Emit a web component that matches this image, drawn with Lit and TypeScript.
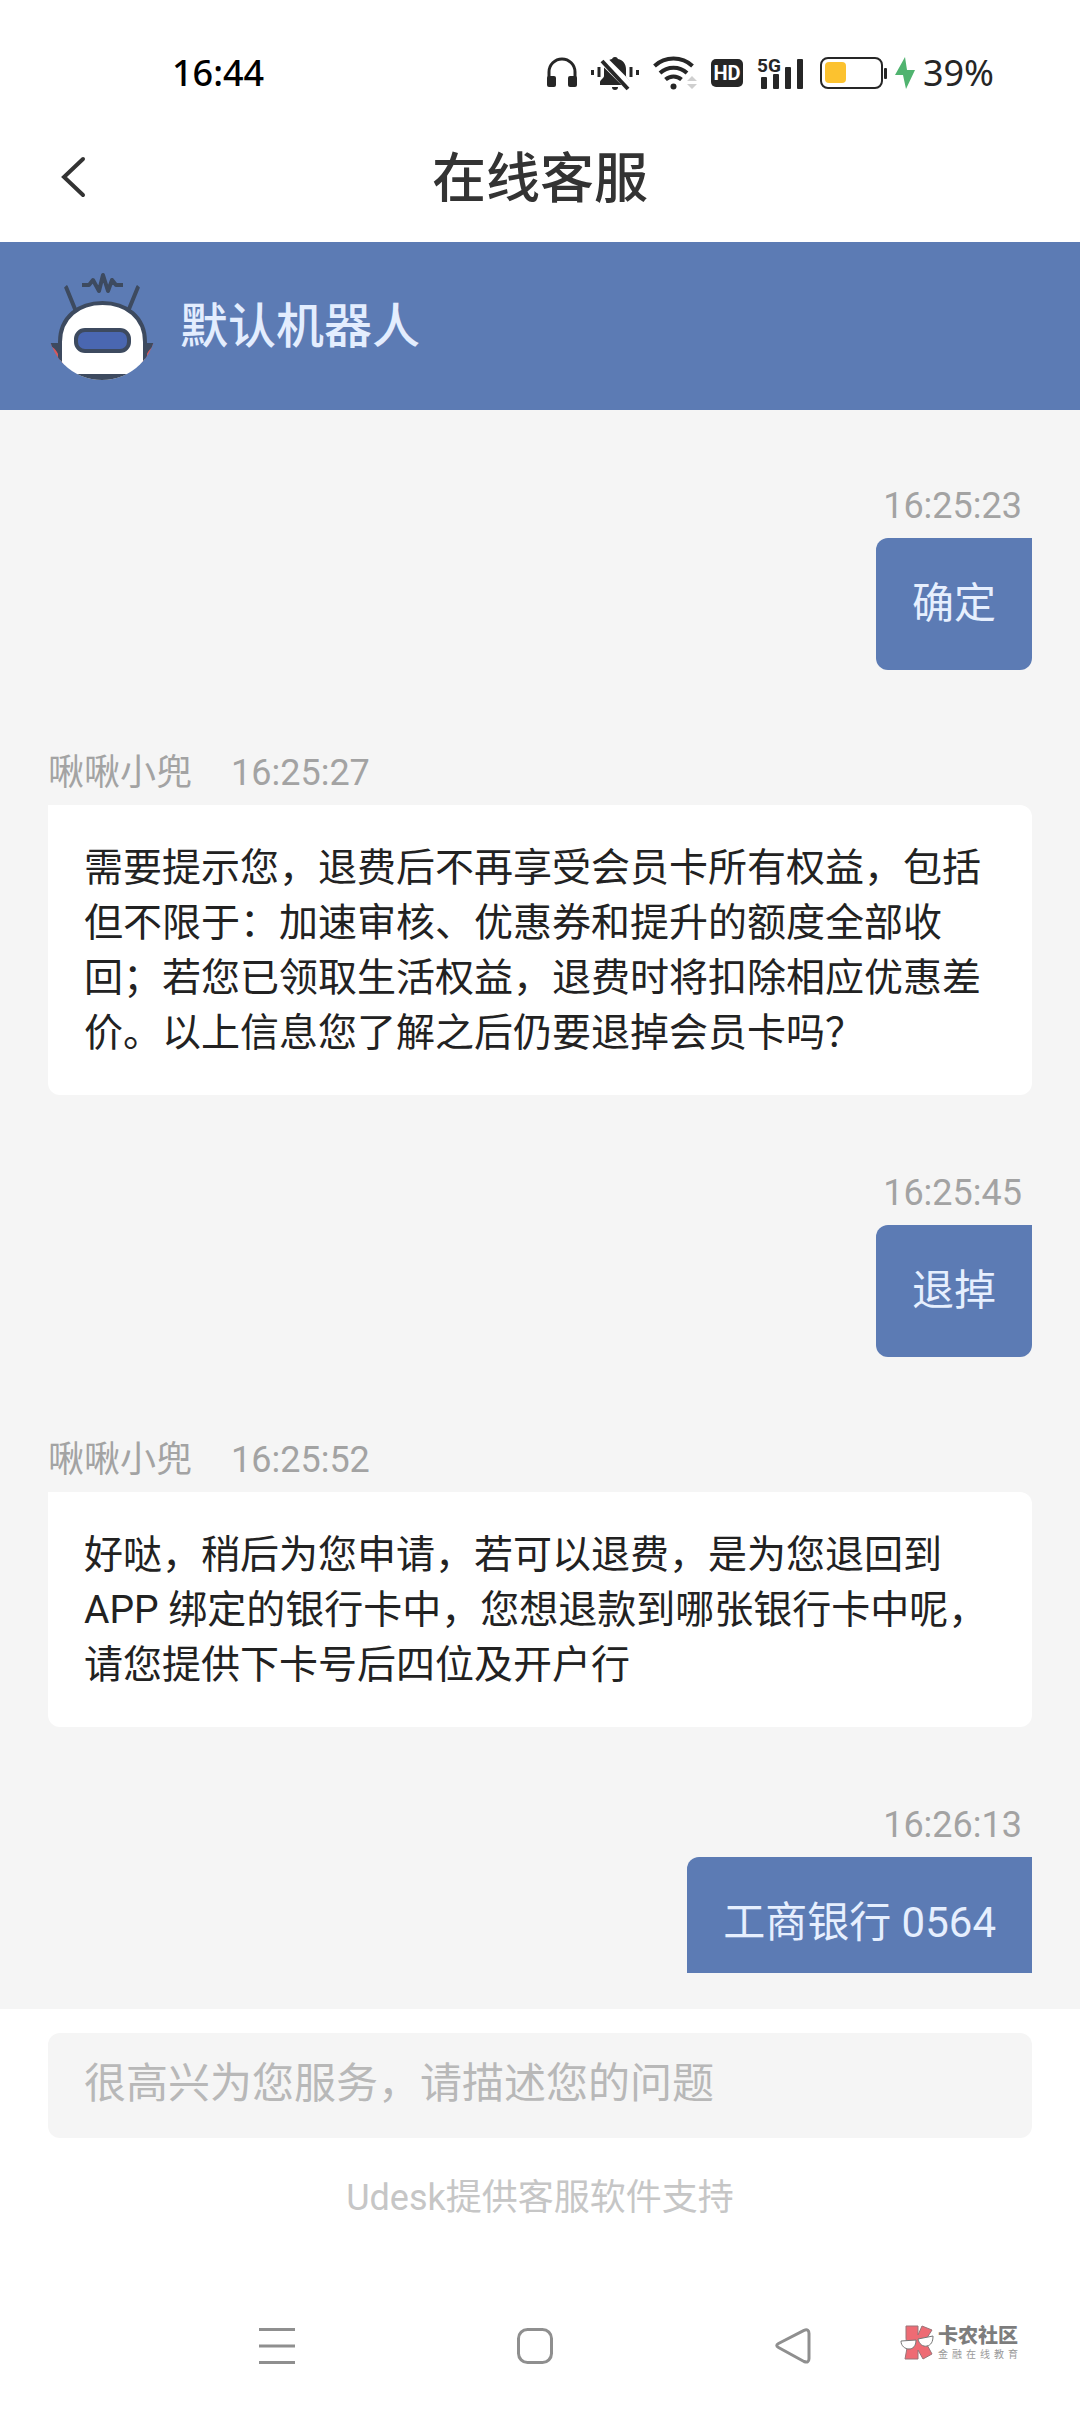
import { LitElement, html, css, svg } from "lit";
import { customElement, property, state } from "lit/decorators.js";

interface Message {
  from: "agent" | "user";
  time: string;
  text: string;
}

const AGENT_NAME = "啾啾小兜";

const MESSAGES: Message[] = [
  { from: "user", time: "16:25:23", text: "确定" },
  {
    from: "agent",
    time: "16:25:27",
    text: "需要提示您，退费后不再享受会员卡所有权益，包括但不限于：加速审核、优惠券和提升的额度全部收回；若您已领取生活权益，退费时将扣除相应优惠差价。以上信息您了解之后仍要退掉会员卡吗？",
  },
  { from: "user", time: "16:25:45", text: "退掉" },
  {
    from: "agent",
    time: "16:25:52",
    text: "好哒，稍后为您申请，若可以退费，是为您退回到 APP 绑定的银行卡中，您想退款到哪张银行卡中呢，请您提供下卡号后四位及开户行",
  },
  { from: "user", time: "16:26:13", text: "工商银行 0564" },
];

/* Device status bar: clock on the left, indicators on the right. */
@customElement("status-bar")
export class StatusBar extends LitElement {
  static styles = css`
    :host {
      display: flex;
      align-items: center;
      justify-content: space-between;
      height: 82px;
      padding: 32px 86px 0 172px;
      background: #fff;
      color: #262626;
      font-family: "Noto Sans", sans-serif;
      font-size: 36px;
      font-weight: 500;
      line-height: 48px;
    }
    .clock {
      color: #000;
    }
    .indicators,
    .power {
      display: flex;
      align-items: center;
    }
    .indicators {
      gap: 14px;
    }
    .power {
      gap: 8px;
      padding-left: 2px;
    }
    .level {
      font-weight: 400;
    }
    svg {
      display: block;
      flex: none;
      overflow: visible;
    }
    .glyph {
      font-family: Roboto, sans-serif;
      font-weight: 700;
    }
  `;

  render() {
    return html`
      <span class="clock">16:44</span>
      <div class="indicators">
        <svg width="30" height="32" viewBox="0 0 30 32" aria-label="耳机">
          <path d="M2 22V15a13 13 0 0 1 26 0v7" fill="none" stroke="#262626" stroke-width="3" />
          <rect x="0" y="19" width="9" height="11" rx="2" fill="#262626" />
          <rect x="21" y="19" width="9" height="11" rx="2" fill="#262626" />
        </svg>
        <svg width="48" height="36" viewBox="0 0 48 36" aria-label="振动">
          <path
            d="M24 2a3 3 0 0 1 3 2c5 1 8 5 8 10v7c0 2 4 4 4 6v3H9v-3c0-2 4-4 4-6v-7c0-5 3-9 8-10a3 3 0 0 1 3-2z"
            fill="#262626"
          />
          <path d="M21 32h6a3 3 0 0 1-6 0z" fill="#262626" />
          <path d="M10 3l30 30" stroke="#fff" stroke-width="9" />
          <path d="M11 6l26 28" stroke="#262626" stroke-width="4" />
          <path d="M1.500 15v5M8 12v10M40 12v10M46.500 15v5" stroke="#262626" stroke-width="3" />
        </svg>
        <svg width="44" height="36" viewBox="0 0 44 36" aria-label="Wi-Fi">
          <g fill="none" stroke="#262626" stroke-width="4">
            <path d="M1.500 11a28 28 0 0 1 38 0" />
            <path d="M7 18a20 20 0 0 1 27 0" />
            <path d="M12.500 24.500a12 12 0 0 1 16 0" />
          </g>
          <circle cx="20.500" cy="31.500" r="3" fill="#262626" />
          <path d="M39 21l5 5H34zM39 34l5-5H34z" fill="#cfcfcf" />
        </svg>
        <svg width="32" height="30" viewBox="0 0 32 30" aria-label="HD">
          <rect x="0" y="1" width="32" height="28" rx="5" fill="#262626" />
          <text class="glyph" x="16" y="22" font-size="20" text-anchor="middle" fill="#fff">HD</text>
        </svg>
        <svg width="47" height="36" viewBox="0 0 47 36" aria-label="5G">
          <text class="glyph" x="0" y="17" font-size="19" fill="#262626">5G</text>
          <g fill="#262626">
            <rect x="4" y="22" width="6" height="12" rx="1" />
            <rect x="16" y="19" width="6" height="15" rx="1" />
            <rect x="28" y="12" width="6" height="22" rx="1" />
            <rect x="40" y="4" width="6" height="30" rx="1" />
          </g>
        </svg>
        <div class="power">
          <svg width="67" height="32" viewBox="0 0 67 32" aria-label="电量">
            <rect x="1" y="1" width="61" height="30" rx="7" fill="none" stroke="#262626" stroke-width="2" />
            <rect x="5" y="5" width="21" height="21" rx="4" fill="#fcc22f" />
            <rect x="64" y="11" width="3" height="11" rx="1" fill="#262626" />
          </svg>
          <svg width="20" height="32" viewBox="0 0 20 32" aria-label="充电中">
            <path d="M10 0L0 18h8L11 32 20 13h-8z" fill="#50b36f" />
          </svg>
          <span class="level">39%</span>
        </div>
      </div>
    `;
  }
}

/* One chat entry: a meta line above a speech bubble. */
@customElement("chat-message")
export class ChatMessage extends LitElement {
  @property({ attribute: false }) message!: Message;

  static styles = css`
    :host {
      display: block;
    }
    .message {
      display: flex;
      flex-direction: column;
    }
    .user {
      align-items: flex-end;
    }
    .agent {
      padding-top: 5px;
    }
    .meta {
      display: flex;
      gap: 39px;
      padding-top: 2px;
      margin-bottom: 10px;
      color: #a3a3a3;
      font-size: 36px;
      line-height: 44px;
    }
    .user .meta {
      padding-right: 10px;
    }
    .bubble {
      margin: 0;
    }
    .user .bubble {
      padding: 36px;
      border-radius: 12px 0 12px 12px;
      background: #5c7bb4;
      color: #e6effe;
      font-size: 42px;
      line-height: 60px;
    }
    .agent .bubble {
      padding: 36px 36px 34px;
      border-radius: 0 12px 12px 12px;
      background: #fff;
      color: #222;
      font-size: 39px;
      line-height: 55px;
    }
  `;

  render() {
    const { from, time, text } = this.message;
    return html`
      <article class="message ${from}">
        <div class="meta">
          ${from === "agent" ? html`<span>${AGENT_NAME}</span>` : null}
          <time>${time}</time>
        </div>
        <p class="bubble">${text}</p>
      </article>
    `;
  }
}

const robot = svg`
  <defs><clipPath id="round"><circle cx="54" cy="54" r="54" /></clipPath></defs>
  <g clip-path="url(#round)">
    <path d="M3 71h12v22H9L3 82z" fill="#d9595c" />
    <path d="M106 71H94v22h6l6-11z" fill="#d9595c" />
    <path d="M2 71h11v20C11 82 8 76 2 74zM107 71H96v20c2-9 5-15 11-17z" fill="#3d4a5f" />
    <path d="M18 15l9 22M90 15l-9 22" stroke="#3d4a5f" stroke-width="4" stroke-linecap="round" />
    <path d="M12 110V70C12 45 31 31 54.500 31S97 45 97 70v40z" fill="#fff" stroke="#3d4a5f" stroke-width="4" />
    <rect x="10" y="102" width="90" height="8" fill="#3d4a5f" />
    <rect x="28" y="58" width="53" height="21" rx="9" fill="#4a67b1" stroke="#3d4a5f" stroke-width="4" />
  </g>
  <path d="M34 13h7l4-5 6 11L55 3l5 16 4-11 4 5h7" fill="none" stroke="#3d4a5f" stroke-width="4"
    stroke-linejoin="round" />
`;

@customElement("app-root")
export class AppRoot extends LitElement {
  @state() private draft = "";

  static styles = css`
    :host {
      display: flex;
      flex-direction: column;
      position: relative;
      height: 100vh;
      background: #fff;
      font-family: Roboto, "Noto Sans CJK SC", sans-serif;
    }
    button {
      display: flex;
      align-items: center;
      justify-content: center;
      padding: 0;
      border: 0;
      background: none;
    }
    svg {
      display: block;
    }
    .titlebar {
      display: grid;
      grid-template-columns: 100px 1fr 100px;
      align-items: center;
      height: 128px;
      padding: 0 24px;
    }
    .title {
      margin: 0;
      padding-top: 4px;
      color: #333;
      font-size: 54px;
      font-weight: 500;
      line-height: 72px;
      text-align: center;
    }
    .agentbar {
      display: flex;
      align-items: center;
      gap: 24px;
      padding: 30px 48px;
      background: #5c7bb4;
      color: #e3edfe;
    }
    .agentname {
      margin: 0;
      padding-top: 2px;
      font-size: 48px;
      font-weight: 500;
      line-height: 64px;
    }
    .conversation {
      display: flex;
      flex: 1;
      flex-direction: column;
      min-height: 0;
      padding-bottom: 36px;
      background: #f5f5f5;
    }
    .messages {
      display: flex;
      flex: 1;
      flex-direction: column;
      gap: 74px;
      min-height: 0;
      overflow-y: auto;
      padding: 72px 48px 0;
      scrollbar-width: none;
    }
    .messages chat-message {
      flex: none;
    }
    .composer {
      padding: 24px 48px 0;
    }
    .draft {
      display: block;
      box-sizing: border-box;
      width: 100%;
      height: 105px;
      padding: 0 36px 4px;
      border: 0;
      border-radius: 12px;
      background: #f5f5f5;
      color: #222;
      font-family: inherit;
      font-size: 42px;
      line-height: 60px;
    }
    .draft::placeholder {
      color: #b8b8b8;
      opacity: 1;
    }
    .credit {
      margin: 0;
      padding: 36px 0 58px;
      color: #c6c6c6;
      font-size: 36px;
      line-height: 48px;
      text-align: center;
    }
    .navbar {
      display: grid;
      grid-template-columns: repeat(3, 1fr);
      height: 132px;
      padding: 0 158px 0 148px;
    }
    .watermark {
      position: absolute;
      right: 62px;
      bottom: 51px;
      display: flex;
      align-items: center;
      gap: 4px;
    }
    .brand {
      display: flex;
      flex-direction: column;
      width: 80px;
      font-family: "Noto Sans CJK SC", sans-serif;
    }
    .brandname {
      color: #7d7d7d;
      font-size: 20px;
      font-weight: 900;
      line-height: 24px;
    }
    .tagline {
      color: #999;
      font-size: 10px;
      line-height: 14px;
      text-align-last: justify;
    }
  `;

  private onInput(event: Event) {
    this.draft = (event.target as HTMLInputElement).value;
  }

  render() {
    return html`
      <status-bar></status-bar>
      <header class="titlebar">
        <button type="button" aria-label="返回">
          <svg width="26" height="44" viewBox="0 0 26 44">
            <path d="M22 3L3 21l19 18" fill="none" stroke="#333" stroke-width="4" stroke-linecap="round" />
          </svg>
        </button>
        <h1 class="title">在线客服</h1>
      </header>
      <section class="agentbar">
        <svg width="108" height="108" viewBox="0 0 108 108" aria-hidden="true">${robot}</svg>
        <h2 class="agentname">默认机器人</h2>
      </section>
      <main class="conversation">
        <div class="messages">
          ${MESSAGES.map((m) => html`<chat-message .message=${m}></chat-message>`)}
        </div>
      </main>
      <form class="composer" @submit=${(e: Event) => e.preventDefault()}>
        <input
          class="draft"
          type="text"
          aria-label="消息"
          placeholder="很高兴为您服务，请描述您的问题"
          .value=${this.draft}
          @input=${this.onInput}
        />
      </form>
      <p class="credit">Udesk提供客服软件支持</p>
      <nav class="navbar">
        <button type="button" aria-label="最近任务">
          <svg width="36" height="36" viewBox="0 0 36 36">
            <path d="M0 1.500h36M0 18h36M0 34.500h36" stroke="#8f8f8f" stroke-width="3" />
          </svg>
        </button>
        <button type="button" aria-label="主屏幕">
          <svg width="36" height="36" viewBox="0 0 36 36">
            <rect x="1.500" y="1.500" width="33" height="33" rx="9" fill="none" stroke="#8f8f8f" stroke-width="3" />
          </svg>
        </button>
        <button type="button" aria-label="返回上一页">
          <svg width="36" height="36" viewBox="0 0 36 36">
            <path
              d="M29 2.300L3.500 15.500q-3.500 2 0 4L29 33.500q5 2 5-3V5.500q0-5-5-3.200z"
              fill="none"
              stroke="#8f8f8f"
              stroke-width="3"
              stroke-linejoin="round"
            />
          </svg>
        </button>
      </nav>
      <div class="watermark">
        <svg width="34" height="36" viewBox="0 0 34 36" aria-hidden="true">
          <path
            d="M6 2h12v9l4-9 10 4-7 11 7 13-9 5-5-9v9H5l2-11L6 14z"
            fill="#ee6b74"
            stroke="#9a7478"
            stroke-width="1"
          />
          <path
            d="M1 17l15-1c0 6-3 9-7 9s-8-3-8-8zM18 15l15-3c0 6-2 9-6 10s-8-2-9-7z"
            fill="#fff"
            stroke="#777"
            stroke-width="1"
          />
        </svg>
        <div class="brand">
          <span class="brandname">卡农社区</span>
          <span class="tagline">金融在线教育</span>
        </div>
      </div>
    `;
  }
}
